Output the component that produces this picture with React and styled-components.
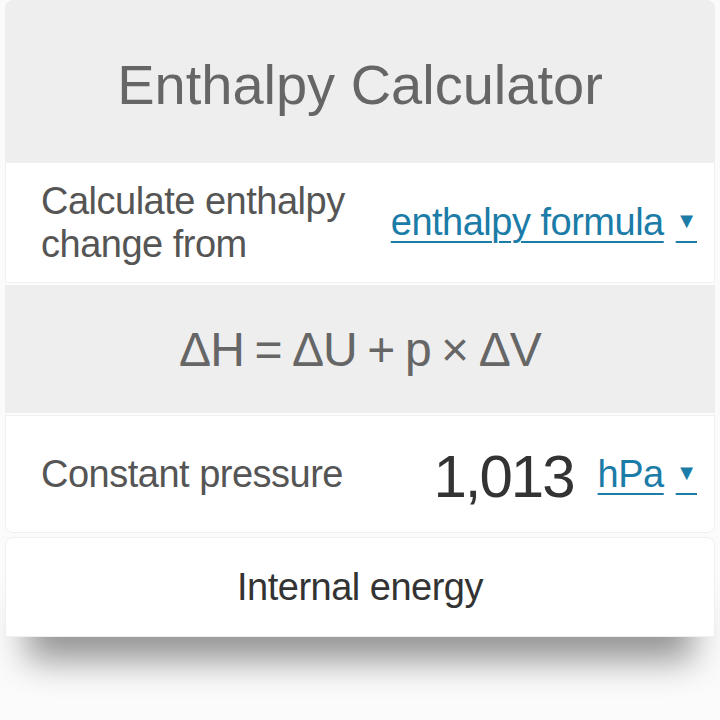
import React from "react";
import styled, { createGlobalStyle } from "styled-components";

const GlobalStyle = createGlobalStyle`
  body {
    margin: 0;
    background: #ffffff;
    font-family: "Liberation Sans", Arial, sans-serif;
  }
`;

const Page = styled.div`
  width: 720px;
  height: 720px;
  padding: 0 5px;
  box-sizing: border-box;
  background: #fbfbfb;
`;

const Card = styled.div`
  display: flex;
  flex-direction: column;
`;

const Header = styled.div`
  height: 162px;
  display: flex;
  align-items: center;
  justify-content: center;
  background: #eeeeee;
  border-radius: 8px 8px 0 0;
  color: #666666;
  font-size: 56px;
  padding-top: 6px;
  box-sizing: border-box;
`;

const Row = styled.div`
  height: ${(props) => props.height || 120}px;
  display: flex;
  align-items: center;
  justify-content: space-between;
  padding: 0 17px 0 35px;
  background: #ffffff;
  border: 1px solid #f0f0f0;
  border-radius: ${(props) => props.radius || "0"};
  box-sizing: border-box;
`;

const Label = styled.div`
  color: #555555;
  font-size: 38px;
  line-height: 43px;
  letter-spacing: -0.5px;
`;

const Select = styled.span`
  color: #1b7ca8;
  font-size: 38px;
  letter-spacing: -0.5px;
  text-decoration: underline;
  text-decoration-thickness: 2px;
  text-underline-offset: 6px;
  white-space: nowrap;
`;

const Caret = styled.span`
  font-size: 22px;
  margin-left: 12px;
  vertical-align: 7px;
`;

const Formula = styled.div`
  height: 128px;
  display: flex;
  align-items: center;
  justify-content: center;
  background: #eeeeee;
  color: #666666;
  font-size: 48px;
  margin: 2px 0;
  letter-spacing: -0.9px;
  word-spacing: -2px;
`;

const ValueGroup = styled.div`
  display: flex;
  align-items: center;
  gap: 24px;
`;

const Value = styled.span`
  color: #333333;
  font-size: 60px;
  letter-spacing: -2px;
  margin-top: 4px;
`;

const Result = styled.div`
  height: 100px;
  margin-top: 4px;
  display: flex;
  align-items: center;
  justify-content: center;
  background: #ffffff;
  border: 1px solid #f0f0f0;
  border-radius: 8px 8px 0 0;
  color: #333333;
  font-size: 38px;
  letter-spacing: -0.5px;
  box-shadow: 0 45px 35px -22px rgba(0, 0, 0, 0.42);
  box-sizing: border-box;
`;

export default function App() {
  return (
    <Page>
      <GlobalStyle />
      <Card>
        <Header>Enthalpy Calculator</Header>
        <Row height={121}>
          <Label>
            Calculate enthalpy
            <br />
            change from
          </Label>
          <Select>
            enthalpy formula<Caret>▼</Caret>
          </Select>
        </Row>
        <Formula>ΔH = ΔU + p × ΔV</Formula>
        <Row height={118} radius="0 0 8px 8px">
          <Label>Constant pressure</Label>
          <ValueGroup>
            <Value>1,013</Value>
            <Select>
              hPa<Caret>▼</Caret>
            </Select>
          </ValueGroup>
        </Row>
        <Result>Internal energy</Result>
      </Card>
    </Page>
  );
}
